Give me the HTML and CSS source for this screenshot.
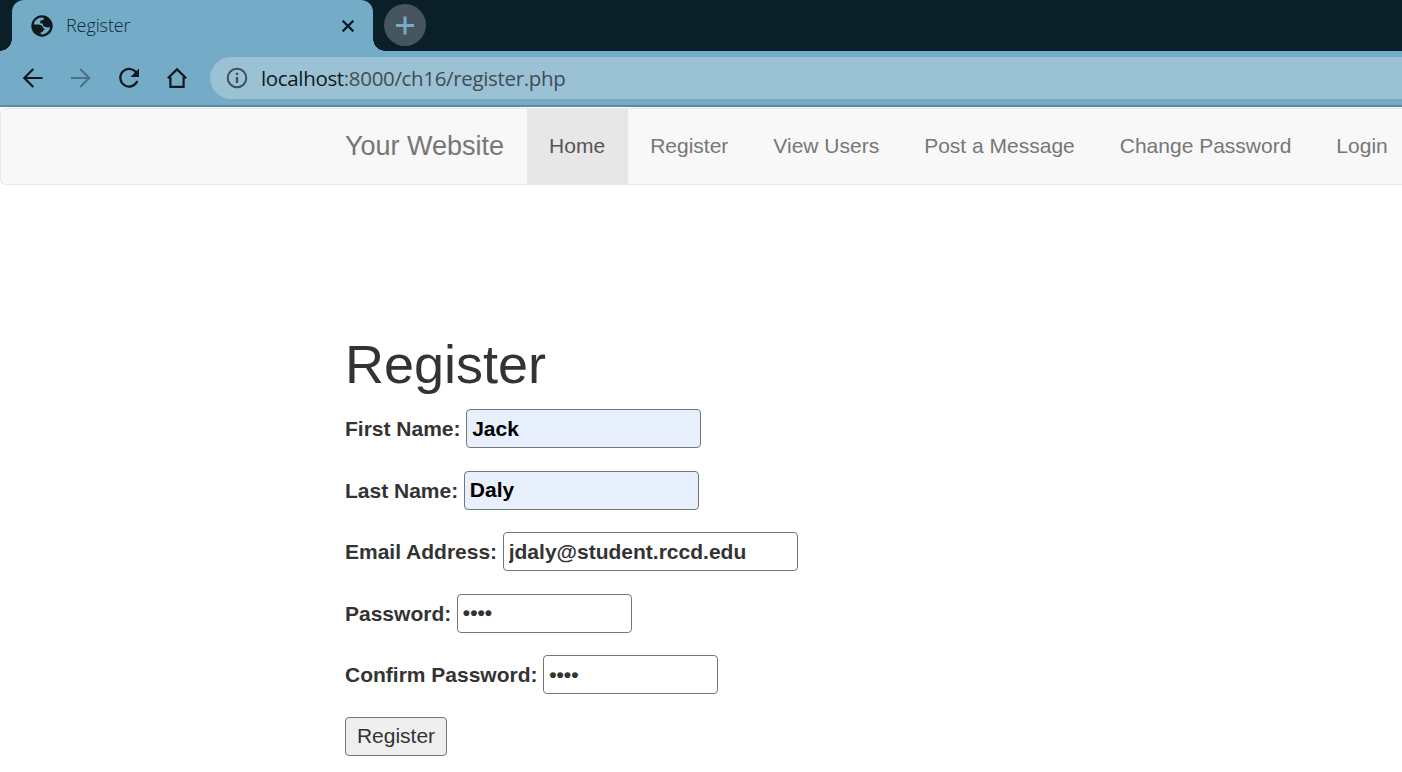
FILE: index.html
```html
<!DOCTYPE html>
<html lang="en">
<head>
<meta charset="utf-8">
<title>Register</title>
<link rel="stylesheet" href="styles.css">
</head>
<body>
<div class="tabstrip">
  <div class="tab">
    <svg class="globe" width="22" height="22" viewBox="0 0 22 22"><circle cx="11" cy="11" r="10.700" fill="#10191f"/><path fill="#74abc6" d="M2.800 9.400C3.500 5.500 6.800 2.700 10.600 2.600L13 3C12.900 4.500 12.300 5.200 10.800 5.300 9.300 5.400 9.200 6.300 9.200 7.600 9.200 8.400 9.800 8.600 10.800 8.600 11.700 8.600 12 9 12 10 12 11.200 12.600 11.700 13.900 11.700 15.300 11.700 15.600 12.600 16.600 12.600L19.100 12.300C18.400 16.300 15 19.300 11 19.400L9.700 19.300V17.400C11.300 17.400 12.200 16.800 12.200 15.300 13.500 15.300 14 14.700 13.400 13.800 12.700 13.700 12.200 13.300 11.900 12.300 11.300 10.400 9.600 9.600 7.400 9.600Z"/></svg>
    <span class="tab-title">Register</span>
    <svg class="close" width="16" height="16" viewBox="0 0 16 16"><path d="M2.600 2.600l10.800 10.800M13.400 2.600L2.600 13.400" stroke="#0b1f29" stroke-width="2.200"/></svg>
  </div>
  <div class="newtab"><svg width="42" height="42" viewBox="0 0 42 42"><path d="M21 12.500v18M12 21.500h18" stroke="#74abc6" stroke-width="3"/></svg></div>
</div>
<div class="toolbar">
  <svg class="tool" width="24" height="24" viewBox="0 0 24 24"><path d="M21.500 12H4M12.300 3L3.300 12l9 9" fill="none" stroke="#10191f" stroke-width="2.200"/></svg>
  <svg class="tool" width="24" height="24" viewBox="0 0 24 24"><path d="M2 12h17.500M11.200 3l9 9-9 9" fill="none" stroke="#4d7285" stroke-width="2.200"/></svg>
  <svg class="tool" width="24" height="24" viewBox="0 0 24 24"><path d="M19.400 6.800A8.800 8.800 0 1 0 20.300 15" fill="none" stroke="#10191f" stroke-width="2.200"/><path d="M22 2.400v8.500h-8.500z" fill="#10191f"/></svg>
  <svg class="tool" width="24" height="24" viewBox="0 0 24 24"><path d="M2.800 12.300L12 3.400l9.200 8.900M5.400 11v9.800h13.200V11" fill="none" stroke="#10191f" stroke-width="2.200"/></svg>
  <div class="omnibox">
    <svg width="22" height="22" viewBox="0 0 22 22"><circle cx="11" cy="11" r="9.300" fill="none" stroke="#40505a" stroke-width="2"/><path d="M11 10v6M11 5.800v2.300" stroke="#40505a" stroke-width="2.400"/></svg>
    <span class="url"><span class="host">localhost</span>:8000/ch16/register.php</span>
  </div>
</div>
<nav class="navbar">
  <a class="brand">Your Website</a>
  <a class="link active">Home</a>
  <a class="link">Register</a>
  <a class="link">View Users</a>
  <a class="link">Post a Message</a>
  <a class="link">Change Password</a>
  <a class="link last">Login</a>
</nav>
<main class="content">
  <h1 class="title">Register</h1>
  <form class="form">
    <label class="row"><span class="caption">First Name:</span><input class="field filled" type="text" value="Jack"></label>
    <label class="row"><span class="caption">Last Name:</span><input class="field filled" type="text" value="Daly"></label>
    <label class="row"><span class="caption">Email Address:</span><input class="field email" type="text" value="jdaly@student.rccd.edu"></label>
    <label class="row"><span class="caption">Password:</span><input class="field password" type="password" value="jack"></label>
    <label class="row"><span class="caption">Confirm Password:</span><input class="field password" type="password" value="jack"></label>
    <button class="submit" type="button">Register</button>
  </form>
</main>
</body>
</html>
```
FILE: styles.css
```css
* { box-sizing: border-box; }
body {
  margin: 0;
  height: 772px;
  overflow: hidden;
  background: #fff;
  color: #333;
  font: 21px/30px "Liberation Sans", Arial, sans-serif;
}
.tabstrip {
  display: flex;
  height: 51px;
  padding-left: 12px;
  background: #0a1f28;
}
.tab {
  position: relative;
  display: flex;
  align-items: center;
  width: 361px;
  padding: 0 17px 0 19px;
  border-radius: 12px 12px 0 0;
  background: #74abc6;
}
.tab::before, .tab::after {
  content: "";
  position: absolute;
  bottom: 0;
  width: 12px;
  height: 12px;
}
.tab::before { left: -12px; background: radial-gradient(circle at 0 0, #0a1f28 11.5px, #74abc6 12px); }
.tab::after { right: -12px; background: radial-gradient(circle at 100% 0, #0a1f28 11.5px, #74abc6 12px); }
.globe { margin-right: 13px; }
.tab-title {
  flex: 1;
  padding-bottom: 1px;
  color: #0b2a3c;
  font: 300 18px/24px "Open Sans", sans-serif;
  letter-spacing: -0.1px;
}
.newtab {
  width: 42px;
  height: 42px;
  margin: 4px 0 0 11px;
  border-radius: 50%;
  background: #47555f;
}
.newtab svg { display: block; }
.toolbar {
  display: flex;
  align-items: center;
  gap: 24px;
  height: 56px;
  padding-left: 21px;
  border-bottom: 2px solid #5b8aa2;
  background: #74abc6;
}
.tool { flex: none; }
.omnibox {
  flex: 1;
  display: flex;
  align-items: center;
  gap: 13px;
  height: 42px;
  margin-left: -3px;
  padding-left: 16px;
  border-radius: 21px 0 0 21px;
  background: #9ac1d4;
}
.url {
  color: #3f4d56;
  font: 20.5px/30px "Open Sans", sans-serif;
  letter-spacing: -0.34px;
}
.host { color: #10191f; }
.navbar {
  display: flex;
  height: 77px;
  margin-top: 1px;
  padding-left: 321.5px;
  border: 1px solid #e7e7e7;
  border-right: 0;
  border-radius: 6px 0 0 6px;
  background: #f8f8f8;
  white-space: nowrap;
}
.brand, .link {
  flex: none;
  padding: 21.5px 22.5px 23.5px;
  color: #777;
}
.brand { font-size: 27px; }
.active { background: #e7e7e7; color: #555; }
.last { padding-right: 0; }
.content { padding: 149px 0 0 345px; }
.title {
  margin: 0 0 15px;
  font-size: 54px;
  font-weight: 500;
  line-height: 60px;
}
.form {
  display: flex;
  flex-direction: column;
  align-items: flex-start;
  gap: 22.5px;
}
.row {
  display: flex;
  align-items: center;
  gap: 5.6px;
  height: 39px;
  font-weight: 700;
}
.caption { padding-top: 1px; }
.field {
  width: 235px;
  height: 39px;
  padding: 1px 5px;
  border: 1px solid #767676;
  border-radius: 4px;
  background: #fff;
  color: #333;
  font: inherit;
}
.filled { background: #e8f0fe; color: #000; }
.email { width: 295px; }
.password { width: 175px; }
.submit {
  width: 102px;
  height: 39px;
  padding: 0;
  border: 1px solid #767676;
  border-radius: 4px;
  background: #efefef;
  color: #333;
  font: inherit;
}
```
